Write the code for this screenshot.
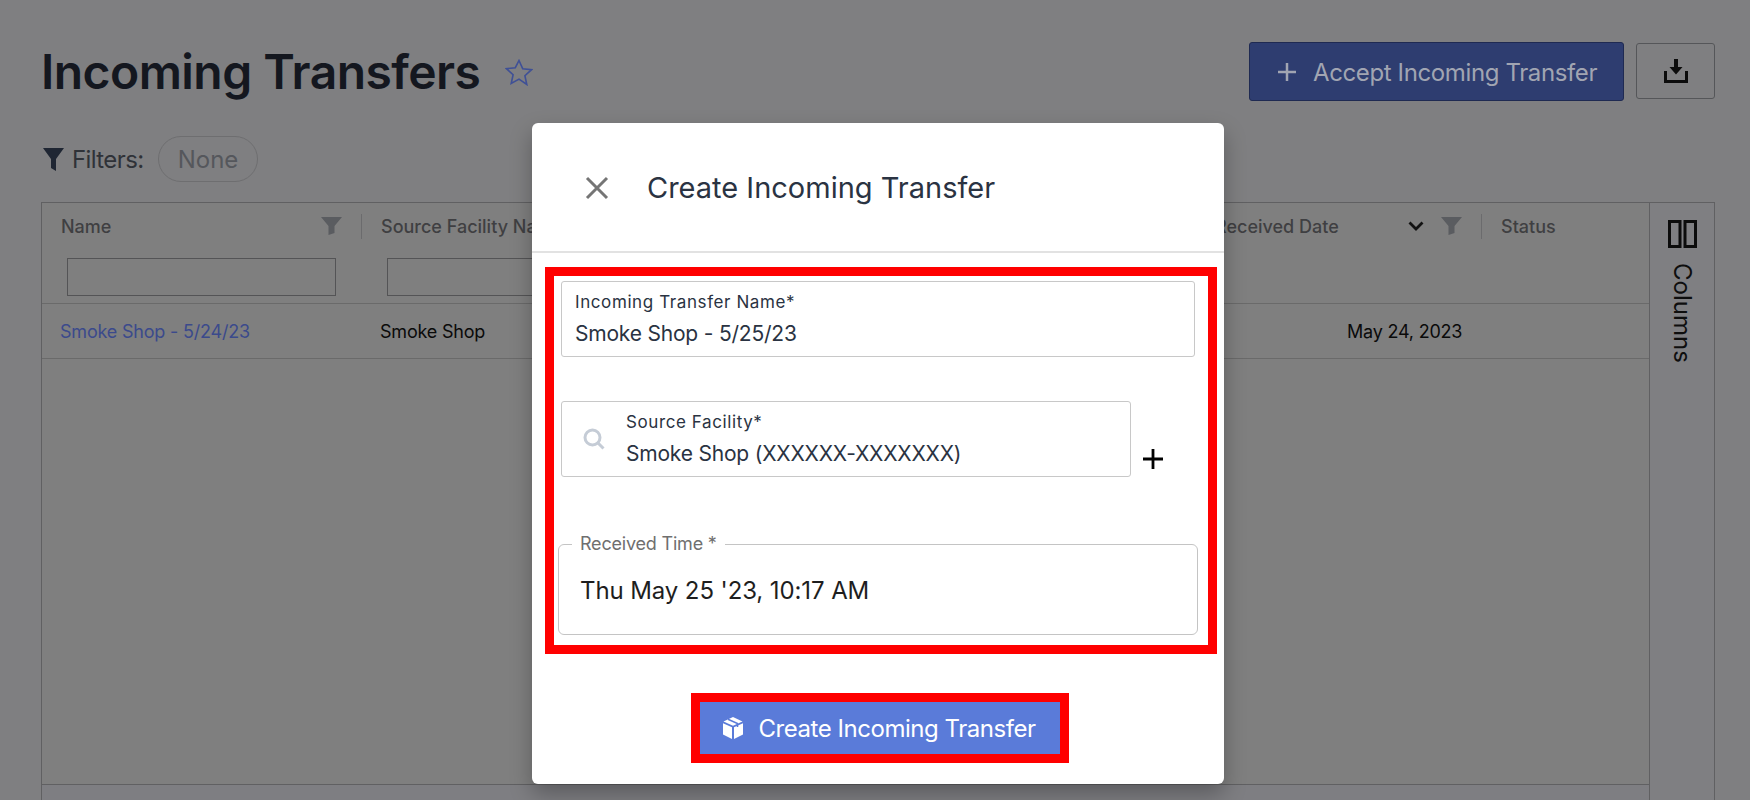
<div class="page">
  <header class="top">
    <div class="heading">
      <h1>Incoming Transfers</h1>
      <svg class="star" viewBox="0 0 28 27" aria-hidden="true"><path d="M14 1.500l3.700 8.200 8.800 1-6.600 6 1.900 8.800L14 20.100l-7.800 4.400 1.900-8.800-6.600-6 8.800-1z"/></svg>
    </div>
    <div class="actions">
      <button class="accept">
        <svg viewBox="0 0 20 20" aria-hidden="true"><path d="M10 1v18M1 10h18"/></svg>
        <span>Accept Incoming Transfer</span>
      </button>
      <button class="download" aria-label="Download">
        <svg viewBox="0 0 24 24" aria-hidden="true"><path class="fill" d="M10 0h4v8h4.500L12 15.500 5.500 8H10z"/><path class="line" d="M1.500 12v10.500h21V12"/></svg>
      </button>
    </div>
  </header>

  <div class="filters">
    <svg class="funnel" viewBox="0 0 21 23" aria-hidden="true"><path d="M0 0h21L13 11v12l-5-3v-9z"/></svg>
    <span class="flabel">Filters:</span>
    <span class="pill">None</span>
  </div>

  <section class="table">
    <div class="main">
      <div class="grid head">
        <div class="hcell">
          <div class="htop"><span>Name</span><svg class="hf" viewBox="0 0 21 18" aria-hidden="true"><path d="M0 0h21l-7.500 9v7l-6 2V9z"/></svg><i></i></div>
          <div class="inputwrap"><div class="finput"></div></div>
        </div>
        <div class="hcell">
          <div class="htop"><span>Source Facility Name</span><svg class="hf" viewBox="0 0 21 18" aria-hidden="true"><path d="M0 0h21l-7.500 9v7l-6 2V9z"/></svg><i></i></div>
          <div class="inputwrap"><div class="finput"></div></div>
        </div>
        <div class="hcell"></div>
        <div class="hcell">
          <div class="htop recv"><span>Received Date</span><svg class="chev" viewBox="0 0 16 10" aria-hidden="true"><path d="M1.500 1.500L8 8l6.500-6.500"/></svg><svg class="hf" viewBox="0 0 21 18" aria-hidden="true"><path d="M0 0h21l-7.500 9v7l-6 2V9z"/></svg><i></i></div>
        </div>
        <div class="hcell">
          <div class="htop"><span>Status</span></div>
        </div>
      </div>
      <div class="grid row">
        <a href="#a" class="link">Smoke Shop - 5/24/23</a>
        <span class="cell">Smoke Shop</span>
        <span></span>
        <span class="cell date">May 24, 2023</span>
        <span></span>
      </div>
      <div class="empty"></div>
      <div class="foot"></div>
    </div>
    <aside class="side">
      <svg viewBox="0 0 29 28" aria-hidden="true"><path d="M1.500 1.500h10.500v25H1.500zM17 1.500h10.500v25H17z"/></svg>
      <span>Columns</span>
    </aside>
  </section>
</div>

<div class="modal" role="dialog">
  <div class="mhead">
    <svg class="close" viewBox="0 0 24 24" aria-hidden="true"><path d="M2 2l20 20M22 2L2 22"/></svg>
    <h2>Create Incoming Transfer</h2>
  </div>
  <div class="mbody">
    <div class="redbox">
      <div class="field">
        <div class="lab">Incoming Transfer Name*</div>
        <div class="val">Smoke Shop - 5/25/23</div>
      </div>
      <div class="srcrow">
        <div class="field src">
          <svg class="search" viewBox="0 0 22 22" aria-hidden="true"><circle cx="9.500" cy="9.500" r="7.500"/><path d="M15 15l5.500 5.500"/></svg>
          <div>
            <div class="lab">Source Facility*</div>
            <div class="val">Smoke Shop (XXXXXX-XXXXXXX)</div>
          </div>
        </div>
        <svg class="plus" viewBox="0 0 20 20" aria-hidden="true"><path d="M10 0v20M0 10h20"/></svg>
      </div>
      <fieldset class="time">
        <legend>Received Time *</legend>
        <div class="tval">Thu May 25 '23, 10:17 AM</div>
      </fieldset>
    </div>
    <div class="cta">
      <button class="create">
        <svg viewBox="0 0 22 22" aria-hidden="true"><path d="M11 0l9.500 4.500L11 8.700 1.500 4.500z" class="w"/><path d="M1 6.300l9 4V22l-9-4.500zM12 10.300l9-4v11.200L12 22z" class="w"/><path d="M6 2.200l9.500 4.300V10" class="b"/></svg>
        <span>Create Incoming Transfer</span>
      </button>
    </div>
  </div>
</div>

<style>
  :global(body) {
    margin: 0;
    background: #7f7f81;
    font-family: Inter, "Liberation Sans", sans-serif;
    overflow: hidden;
  }
  .page {
    height: 800px;
    padding: 0 35px 0 41px;
    box-sizing: border-box;
    display: flex;
    flex-direction: column;
    overflow: hidden;
  }
  .top {
    display: flex;
    justify-content: space-between;
    height: 136px;
    padding-top: 42px;
    box-sizing: border-box;
  }
  .heading { display: flex; align-items: flex-start; gap: 25px; }
  h1 {
    margin: 0;
    font-size: 48px;
    line-height: 60px;
    font-weight: 600;
    color: #14171f;
    letter-spacing: -0.55px;
  }
  .star {
    width: 28px;
    height: 27px;
    margin-top: 17px;
    fill: none;
    stroke: #3f5096;
    stroke-width: 1.6;
  }
  .actions { display: flex; gap: 12px; align-items: flex-start; }
  .accept {
    width: 375px;
    height: 59px;
    background: #2e3d70;
    border: 1px solid #1f2a52;
    border-radius: 3px;
    display: flex;
    align-items: center;
    gap: 16px;
    padding: 1px 0 0 27px;
    box-sizing: border-box;
    color: #a1a5b2;
    font: 400 24px Inter, sans-serif;
    letter-spacing: -0.38px;
  }
  .accept svg {
    width: 20px;
    height: 20px;
    fill: none;
    stroke: #a1a5b2;
    stroke-width: 2.5;
  }
  .download {
    width: 79px;
    height: 56px;
    margin-top: 1px;
    background: transparent;
    border: 1px solid #555659;
    border-radius: 3px;
    display: flex;
    align-items: center;
    justify-content: center;
  }
  .download svg { width: 24px; height: 24px; }
  .download .fill { fill: #0c0c0c; }
  .download .line { fill: none; stroke: #0c0c0c; stroke-width: 3; }

  .filters {
    display: flex;
    align-items: center;
    height: 46px;
    color: #33363c;
    font-size: 24px;
  }
  .funnel { width: 21px; height: 23px; margin: 0 8px 0 2px; fill: #1f2633; }
  .flabel { color: #2f3238; width: 86px; letter-spacing: -0.6px; }
  .pill {
    display: flex;
    align-items: center;
    justify-content: center;
    width: 100px;
    height: 46px;
    box-sizing: border-box;
    border: 1px solid #6e6e70;
    border-radius: 23px;
    color: #55575c;
  }

  .table {
    margin-top: 20px;
    flex: 1;
    display: flex;
    border-left: 1px solid #606062;
    border-right: 1px solid #606062;
    border-top: 1px solid #606062;
    background: #7f7f7f;
  }
  .main { flex: 1; display: flex; flex-direction: column; min-width: 0; }
  .grid {
    display: grid;
    grid-template-columns: 320px 320px 494px 306px 167px;
  }
  .head { height: 100px; border-bottom: 1px solid #6a6a6a; }
  .hcell { display: flex; flex-direction: column; }
  .htop {
    height: 38px;
    margin-top: 4px;
    display: flex;
    align-items: center;
    padding-left: 19px;
    font-size: 18px;
    font-weight: 500;
    color: #3f3f42;
    white-space: nowrap;
  }
  .htop span { flex: 1; }
  .htop.recv span { padding-left: 20px; }
  .htop i {
    width: 1.5px;
    height: 25px;
    background: #6b6b6d;
    margin-left: 19px;
  }
  .hf { width: 21px; height: 18px; fill: #5a5c60; flex: none; }
  .chev {
    width: 16px;
    height: 10px;
    fill: none;
    stroke: #121212;
    stroke-width: 2.8;
    margin-right: 17px;
    flex: none;
  }
  .inputwrap { padding: 13px 26px 0 25px; }
  .finput {
    height: 38px;
    box-sizing: border-box;
    border: 1px solid #545456;
  }
  .row {
    height: 54px;
    align-items: center;
    border-bottom: 1px solid #6a6a6a;
    font-size: 18px;
    white-space: nowrap;
    letter-spacing: -0.2px;
  }
  .link { color: #3b4a8c; text-decoration: none; padding-left: 18px; }
  .cell { color: #0a0a0a; padding-left: 18px; }
  .cell.date { padding-left: 171px; }
  .empty { flex: 1; }
  .foot { height: 15px; border-top: 1px solid #606062; background: #7e7e82; }
  .side {
    width: 65px;
    border-left: 1px solid #606062;
    background: #7f7f82;
    display: flex;
    flex-direction: column;
    align-items: center;
    padding-top: 17px;
    box-sizing: border-box;
    color: #0e0e0e;
  }
  .side svg {
    width: 29px;
    height: 28px;
    fill: none;
    stroke: #0c0c0c;
    stroke-width: 3;
  }
  .side span {
    writing-mode: vertical-rl;
    font-size: 24px;
    margin-top: 15px;
    line-height: 26px;
  }

  .modal {
    position: absolute;
    left: 532px;
    top: 123px;
    width: 692px;
    height: 661px;
    background: #fff;
    border-radius: 6px;
    box-shadow: 0 10px 22px rgba(0, 0, 0, 0.28);
  }
  .mhead {
    height: 130px;
    display: flex;
    align-items: center;
    gap: 38px;
    padding-left: 53px;
    padding-top: 1px;
    box-sizing: border-box;
    border-bottom: 2px solid #e2e2e2;
  }
  .close {
    width: 24px;
    height: 24px;
    fill: none;
    stroke: #757575;
    stroke-width: 3;
  }
  h2 {
    margin: 0;
    font-size: 29px;
    font-weight: 400;
    color: #2a3342;
    white-space: nowrap;
  }
  .mbody { padding: 14px 7px 0 13px; }
  .redbox {
    height: 387px;
    box-sizing: border-box;
    border: 9px solid #f00;
    padding: 5px 13px 0 7px;
  }
  .field {
    height: 76px;
    box-sizing: border-box;
    border: 1px solid #c8c8c8;
    border-radius: 3px;
    padding: 10px 13px;
  }
  .lab {
    font-size: 17px;
    line-height: 20px;
    letter-spacing: 0.6px;
    color: #2a3342;
    white-space: nowrap;
  }
  .val {
    margin-top: 8px;
    font-size: 21px;
    line-height: 28px;
    letter-spacing: -0.2px;
    color: #2a3342;
    white-space: nowrap;
  }
  .srcrow {
    display: flex;
    align-items: flex-start;
    margin-top: 44px;
    gap: 12px;
  }
  .field.src {
    width: 570px;
    display: flex;
    align-items: flex-start;
    gap: 21px;
    padding-left: 21px;
  }
  .search {
    width: 22px;
    height: 22px;
    margin-top: 16px;
    fill: none;
    stroke: #c5ccd6;
    stroke-width: 3;
    flex: none;
  }
  .plus {
    width: 20px;
    height: 20px;
    margin-top: 48px;
    fill: none;
    stroke: #000;
    stroke-width: 2.8;
  }
  .time {
    margin: 56px 0 0 -3px;
    width: 640px;
    height: 102px;
    box-sizing: border-box;
    border: 1px solid #c4c4c4;
    border-radius: 6px;
    padding: 0 21px;
    min-width: 0;
  }
  legend {
    font-size: 18px;
    line-height: 22px;
    letter-spacing: -0.2px;
    color: #6f6f6f;
    padding: 0 8px;
    margin-left: -8px;
    white-space: nowrap;
  }
  .tval {
    margin-top: 20px;
    font-size: 24px;
    line-height: 32px;
    letter-spacing: -0.1px;
    color: #1e1e1e;
    white-space: nowrap;
  }
  .cta { display: flex; justify-content: center; margin-top: 39px; padding-right: 3px; }
  .create {
    width: 378px;
    height: 70px;
    box-sizing: border-box;
    border: 9px solid #f00;
    background: #5a7bd9;
    color: #fff;
    display: flex;
    align-items: center;
    gap: 15px;
    padding: 0 0 0 22px;
    font: 400 24px Inter, sans-serif;
    letter-spacing: -0.46px;
  }
  .create svg { width: 22px; height: 22px; flex: none; }
  .create .w { fill: #fff; }
  .create .b { fill: none; stroke: #5a7bd9; stroke-width: 1.5; }
</style>
